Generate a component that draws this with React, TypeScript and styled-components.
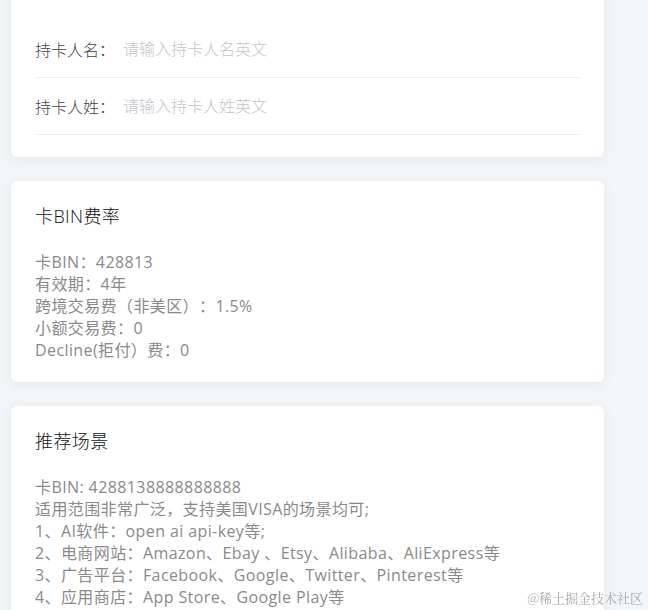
import React from 'react';
import styled, { createGlobalStyle } from 'styled-components';

const GlobalStyle = createGlobalStyle`
  html, body {
    margin: 0;
    padding: 0;
    background: #f3f5f8;
    font-family: "Open Sans", "Noto Sans CJK SC", sans-serif;
    overflow: hidden;
  }
`;

const holderFields = [
  { label: '持卡人名：', placeholder: '请输入持卡人名英文' },
  { label: '持卡人姓：', placeholder: '请输入持卡人姓英文' },
];

const binRates = [
  '卡BIN：428813',
  '有效期：4年',
  '跨境交易费（非美区）：1.5%',
  '小额交易费：0',
  'Decline(拒付）费：0',
];

const scenes = [
  '卡BIN: 4288138888888888',
  '适用范围非常广泛，支持美国VISA的场景均可;',
  '1、AI软件：open ai api-key等;',
  '2、电商网站：Amazon、Ebay 、Etsy、Alibaba、AliExpress等',
  '3、广告平台：Facebook、Google、Twitter、Pinterest等',
  '4、应用商店：App Store、Google Play等',
];

const App: React.FC = () => {
  return (
    <>
      <GlobalStyle />
      <Page>
        <Card $top={0}>
          {holderFields.map((field) => (
            <FieldRow key={field.label}>
              <FieldLabel>{field.label}</FieldLabel>
              <FieldInput placeholder={field.placeholder} />
            </FieldRow>
          ))}
        </Card>

        <Card>
          <CardTitle>卡BIN费率</CardTitle>
          <InfoList>
            {binRates.map((line) => (
              <InfoLine key={line}>{line}</InfoLine>
            ))}
          </InfoList>
        </Card>

        <Card>
          <CardTitle>推荐场景</CardTitle>
          <InfoList>
            {scenes.map((line) => (
              <InfoLine key={line}>{line}</InfoLine>
            ))}
          </InfoList>
        </Card>
      </Page>
      <Watermark>@稀土掘金技术社区</Watermark>
    </>
  );
};

const Page = styled.div`
  width: 593px;
  margin: -10px 0 0 11px;
  display: flex;
  flex-direction: column;
  gap: 24px;
`;

const Card = styled.div<{ $top?: number }>`
  background: #ffffff;
  border-radius: 6px;
  box-shadow: 0 2px 10px rgba(120, 140, 160, 0.12);
  padding: ${(p) => (p.$top === 0 ? '31px 24px 22px' : '24px 24px 21px')};
`;

const FieldRow = styled.div`
  display: flex;
  align-items: center;
  height: 56px;
  border-bottom: 1px solid #eeeff2;
`;

const FieldLabel = styled.span`
  width: 88px;
  flex-shrink: 0;
  font-size: 16px;
  font-weight: 300;
  color: #444;
`;

const FieldInput = styled.input`
  flex: 1;
  border: none;
  outline: none;
  padding: 0;
  font-family: inherit;
  font-size: 16px;
  font-weight: 300;
  color: #333;
  background: transparent;

  &::placeholder {
    color: #c3c6cc;
  }
`;

const CardTitle = styled.div`
  font-size: 18px;
  line-height: 22px;
  font-weight: 300;
  letter-spacing: 0.4px;
  color: #111;
  margin-bottom: 24px;
`;

const InfoList = styled.div`
  display: flex;
  flex-direction: column;
`;

const InfoLine = styled.div`
  font-size: 16px;
  line-height: 22px;
  letter-spacing: 0.4px;
  text-spacing-trim: space-all;
  color: #8a8a8a;
  white-space: nowrap;
`;

const Watermark = styled.div`
  position: fixed;
  right: 5px;
  bottom: 3px;
  font-family: "Noto Serif CJK SC", "Noto Sans CJK SC", serif;
  font-size: 13px;
  color: #a8a8a8;
`;

export default App;
